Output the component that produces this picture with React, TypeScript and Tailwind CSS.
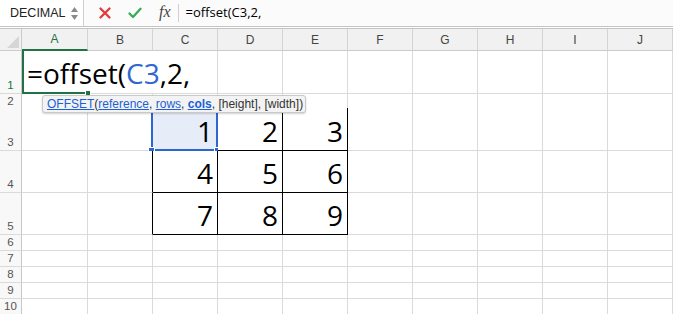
import React from 'react'

const cols = ['A', 'B', 'C', 'D', 'E', 'F', 'G', 'H', 'I', 'J']
const rowHeights = ['h-[43px]', 'h-[14px]', 'h-[43px]', 'h-[42px]', 'h-[42px]', 'h-[16px]', 'h-[16px]', 'h-[16px]', 'h-[16px]', 'h-[16px]']
const values: Record<string, string> = {
  C3: '1', D3: '2', E3: '3',
  C4: '4', D4: '5', E4: '6',
  C5: '7', D5: '8', E5: '9',
}

const gridCols = 'grid grid-cols-[22px_66px_repeat(9,65px)]'

function cellClass(col: string, row: number) {
  const id = `${col}${row}`
  const inTable = ['C', 'D', 'E'].includes(col) && row >= 3 && row <= 5
  let right = 'border-r border-r-[#dadada]'
  let bottom = 'border-b border-b-[#dadada]'
  if (row === 1 && (col === 'A' || col === 'B')) right = ''
  if (row === 1 && col === 'A') bottom = 'border-b-2 border-b-[#217346]'
  if (inTable) {
    right = 'border-r border-r-black'
    bottom = 'border-b border-b-black'
  }
  if (row === 2 && ['C', 'D', 'E'].includes(col)) bottom = 'border-b border-b-black'
  if (col === 'B' && row >= 3 && row <= 5) right = 'border-r border-r-black'
  const extra = id === 'A1' ? 'border-l-2 border-l-[#217346] z-10' : ''
  const bg = id === 'C3' ? 'bg-[#e7edf8]' : 'bg-white'
  return `relative flex items-end ${right} ${bottom} ${extra} ${bg}`
}

function Cell({ col, row }: { col: string; row: number }) {
  const id = `${col}${row}`
  return (
    <div className={cellClass(col, row)}>
      {id === 'A1' && (
        <>
          <span className="whitespace-nowrap pl-[3px] text-[28px] leading-[1.36] text-black font-['Open_Sans',sans-serif]">
            =offset(<span className="text-[#2f68d0]">C3</span>,2,
          </span>
          <span className="absolute -bottom-[4px] -right-[3px] w-[6px] h-[6px] bg-[#217346] border border-white" />
        </>
      )}
      {values[id] && (
        <span className="w-full text-right pr-[4px] text-[28px] leading-[1.36] text-black font-['Open_Sans',sans-serif]">
          {values[id]}
        </span>
      )}
      {id === 'C3' && (
        <>
          <span className="absolute -left-[2px] -top-[1px] -right-[1px] -bottom-[1px] border-2 border-[#2b66d2]" />
          <span className="absolute -bottom-[4px] -left-[5px] w-[7px] h-[7px] bg-[#2b66d2] border border-white" />
          <span className="absolute -bottom-[4px] -right-[4px] w-[7px] h-[7px] bg-[#2b66d2] border border-white" />
        </>
      )}
    </div>
  )
}

export default function App() {
  return (
    <div className="relative w-[673px] h-[314px] overflow-hidden bg-white font-['Liberation_Sans',sans-serif]">
      {/* formula bar */}
      <div className="flex items-center h-[27px] border-b border-[#c4c4c4] bg-[#fbfbfb]">
        <div className="flex items-center justify-between w-[84px] h-full pl-[10px] pr-[5px] bg-white border-r border-[#cfcfcf]">
          <span className="text-[12.5px] text-[#222]">DECIMAL</span>
          <div className="flex flex-col gap-[3px]">
            <svg width="7" height="5" viewBox="0 0 7 5"><path d="M3.5 0 L7 5 L0 5 Z" fill="#8a8a8a" /></svg>
            <svg width="7" height="5" viewBox="0 0 7 5"><path d="M0 0 L7 0 L3.5 5 Z" fill="#8a8a8a" /></svg>
          </div>
        </div>
        <div className="flex items-center gap-[17px] pl-[15px]">
          <svg width="12" height="12" viewBox="0 0 12 12">
            <path d="M1.5 1.5 L10.5 10.5 M10.5 1.5 L1.5 10.5" stroke="#e23b3b" strokeWidth="2.3" strokeLinecap="round" />
          </svg>
          <svg width="14" height="12" viewBox="0 0 14 12">
            <path d="M1.5 6.5 L5 10 L12.5 1.8" stroke="#3aaa58" strokeWidth="2.3" strokeLinecap="round" strokeLinejoin="round" fill="none" />
          </svg>
          <span className="italic text-[16px] leading-none text-[#444] font-['Liberation_Serif',serif] -mt-[2px]">fx</span>
        </div>
        <div className="ml-[7px] w-px h-[18px] bg-[#d0d0d0]" />
        <span className="ml-[7px] text-[13px] text-black font-['Open_Sans',sans-serif]">=offset(C3,2,</span>
      </div>

      {/* column headers */}
      <div className={`${gridCols} h-[23px] border-t border-[#c4c4c4] mt-px bg-[#f1f1f1]`}>
        <div className="relative border-r border-b border-[#cbcbcb]">
          <svg className="absolute right-[2px] bottom-[2px]" width="12" height="12" viewBox="0 0 12 12">
            <path d="M12 0 L12 12 L0 12 Z" fill="#d6d6d6" />
          </svg>
        </div>
        {cols.map((c) => (
          <div
            key={c}
            className={`flex items-center justify-center text-[12px] border-r border-[#d3d3d3] ${
              c === 'A' ? 'text-[#217346] border-b-2 border-b-[#217346]' : 'text-[#444] border-b border-b-[#cbcbcb]'
            }`}
          >
            {c}
          </div>
        ))}
      </div>

      {/* rows */}
      {rowHeights.map((h, i) => {
        const row = i + 1
        return (
          <div key={row} className={`${gridCols} ${h}`}>
            <div
              className={`flex items-end justify-center pb-px text-[11.5px] leading-[14px] bg-[#f8f8f8] border-r border-r-[#c8c8c8] border-b border-b-[#dadada] ${
                row === 1 ? 'text-[#217346]' : 'text-[#555]'
              }`}
            >
              {row}
            </div>
            {cols.map((c) => (
              <Cell key={c} col={c} row={row} />
            ))}
          </div>
        )
      })}

      {/* function tooltip */}
      <div className="absolute left-[42px] top-[95px] z-20 flex items-center h-[18px] w-[264px] pl-[4px] bg-[#f3f3f3] border border-[#c9c9c9] rounded-[3px] shadow-[0_1px_2px_rgba(0,0,0,0.18)] text-[12px] text-[#333] whitespace-nowrap">
        <span className="text-[#1d5fd6] underline">OFFSET</span>(
        <span className="text-[#1d5fd6] underline">reference</span>,&nbsp;
        <span className="text-[#1d5fd6] underline">rows</span>,&nbsp;
        <span className="text-[#1d5fd6] underline font-bold">cols</span>, [height], [width])
      </div>
    </div>
  )
}
